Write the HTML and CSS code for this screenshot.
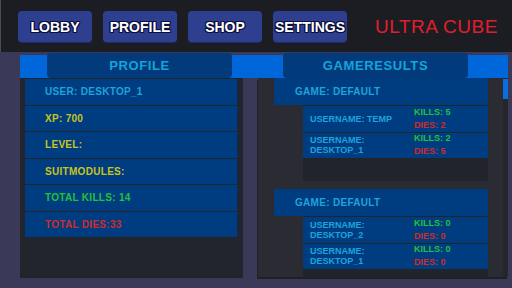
FILE: index.html
```html
<!DOCTYPE html>
<html>
<head>
    <title>Ultra Cube - Profile</title>
    <link rel="stylesheet" href="styles.css">
</head>
<body>
    <div class="topbar">
        <button class="menu-btn">LOBBY</button>
        <button class="menu-btn">PROFILE</button>
        <button class="menu-btn">SHOP</button>
        <button class="menu-btn">SETTINGS</button>
        <span class="title">ULTRA CUBE</span>
    </div>

    <div class="headers">
        <div class="head-box">PROFILE</div>
        <div class="head-box">GAMERESULTS</div>
    </div>

    <div class="panels">
        <div class="profile-panel">
            <div class="stat cyan">USER: DESKTOP_1</div>
            <div class="stat yellow">XP: 700</div>
            <div class="stat yellow">LEVEL:</div>
            <div class="stat yellow">SUITMODULES:</div>
            <div class="stat green">TOTAL KILLS: 14</div>
            <div class="stat red">TOTAL DIES:33</div>
        </div>

        <div class="results-panel">
            <div class="results-list">
                <div class="game">
                    <div class="game-head">GAME: DEFAULT</div>
                    <div class="players">
                        <div class="player">
                            <div class="player-name">USERNAME: TEMP</div>
                            <div class="player-score">
                                <div class="green">KILLS: 5</div>
                                <div class="red">DIES: 2</div>
                            </div>
                        </div>
                        <div class="player">
                            <div class="player-name">USERNAME:<br>DESKTOP_1</div>
                            <div class="player-score">
                                <div class="green">KILLS: 2</div>
                                <div class="red">DIES: 5</div>
                            </div>
                        </div>
                    </div>
                </div>
                <div class="game">
                    <div class="game-head">GAME: DEFAULT</div>
                    <div class="players">
                        <div class="player">
                            <div class="player-name">USERNAME:<br>DESKTOP_2</div>
                            <div class="player-score">
                                <div class="green">KILLS: 0</div>
                                <div class="red">DIES: 0</div>
                            </div>
                        </div>
                        <div class="player">
                            <div class="player-name">USERNAME:<br>DESKTOP_1</div>
                            <div class="player-score">
                                <div class="green">KILLS: 0</div>
                                <div class="red">DIES: 0</div>
                            </div>
                        </div>
                    </div>
                </div>
            </div>
            <div class="scroll-track"><div class="scroll-thumb"></div></div>
        </div>
    </div>
</body>
</html>
```

FILE: styles.css
```css
body {
    margin: 0;
    width: 512px;
    height: 288px;
    overflow: hidden;
    background-color: #3a3957;
    font-family: "Liberation Sans", Arial, sans-serif;
}

.topbar {
    height: 52px;
    box-sizing: border-box;
    padding: 11px 0 0 17px;
    background-color: #1c1d22;
    border-left: 1px solid #4a4a5c;
    display: flex;
    align-items: flex-start;
    gap: 11px;
}

.menu-btn {
    width: 74px;
    height: 31px;
    padding: 0;
    border: none;
    border-radius: 4px;
    background-color: #2f3f90;
    box-shadow: 0 1px 0 #1f2a66;
    color: #ffffff;
    font-family: "Liberation Sans", Arial, sans-serif;
    font-weight: bold;
    font-size: 14px;
    text-shadow: 1px 0 0 #0b0f3c, -1px 0 0 #0b0f3c, 0 1px 0 #0b0f3c, 0 -1px 0 #0b0f3c,
                 1px 1px 0 #0b0f3c, -1px -1px 0 #0b0f3c, 1px -1px 0 #0b0f3c, -1px 1px 0 #0b0f3c;
}

.title {
    margin: 5px 0 0 17px;
    color: #e01f2b;
    font-size: 19px;
    letter-spacing: 0.5px;
}

.headers {
    margin: 3px 4px 0 20px;
    height: 23px;
    padding-left: 27px;
    background-color: #0067da;
    display: flex;
    gap: 51px;
}

.head-box {
    width: 185px;
    height: 25px;
    margin-top: -2px;
    box-sizing: border-box;
    padding-top: 5px;
    border-radius: 4px;
    background-color: #023a7b;
    color: #12a5da;
    font-size: 13px;
    font-weight: bold;
    letter-spacing: 0.6px;
    text-align: center;
}

.panels {
    display: flex;
    gap: 15px;
    padding-left: 20px;
}

.profile-panel {
    width: 223px;
    height: 200px;
    box-sizing: border-box;
    padding: 1px 5px;
    background-color: #23252d;
    display: flex;
    flex-direction: column;
    gap: 1px;
}

.stat {
    height: 25.5px;
    flex-shrink: 0;
    box-sizing: border-box;
    padding-left: 20px;
    background-color: #003d80;
    border-right: 1px solid #0f2a52;
    display: flex;
    align-items: center;
    font-size: 10px;
    font-weight: bold;
    letter-spacing: 0.3px;
}

.cyan { color: #1ea3dc; }
.yellow { color: #c9c41e; }
.green { color: #22c23a; }
.red { color: #d02b2b; }

.results-panel {
    width: 250px;
    height: 199px;
    background-color: #2a2b33;
    box-shadow: -1px 2px 0 #202127;
    display: flex;
    overflow: hidden;
}

.results-list {
    flex: 1;
    padding: 0 15px 0 16px;
    display: flex;
    flex-direction: column;
    gap: 8px;
}

.game-head {
    height: 27px;
    box-sizing: border-box;
    padding-left: 21px;
    background-color: #003d80;
    display: flex;
    align-items: center;
    color: #1ea3dc;
    font-size: 10px;
    font-weight: bold;
    letter-spacing: 0.3px;
}

.players {
    margin-left: 29px;
    min-height: 76px;
    padding-top: 1px;
    box-sizing: border-box;
    background-color: #22242b;
    display: flex;
    flex-direction: column;
    gap: 1px;
}

.player {
    height: 25.5px;
    flex-shrink: 0;
    background-color: #003d80;
    display: flex;
    align-items: center;
    font-size: 9px;
    font-weight: bold;
}

.player-name {
    width: 104px;
    padding-left: 7px;
    color: #1ea3dc;
    line-height: 10px;
}

.player-score {
    line-height: 13px;
}

.scroll-track {
    width: 5px;
    background-color: #25262c;
}

.scroll-thumb {
    height: 20px;
    margin-top: 1px;
    background-color: #0a6ee0;
}
```
